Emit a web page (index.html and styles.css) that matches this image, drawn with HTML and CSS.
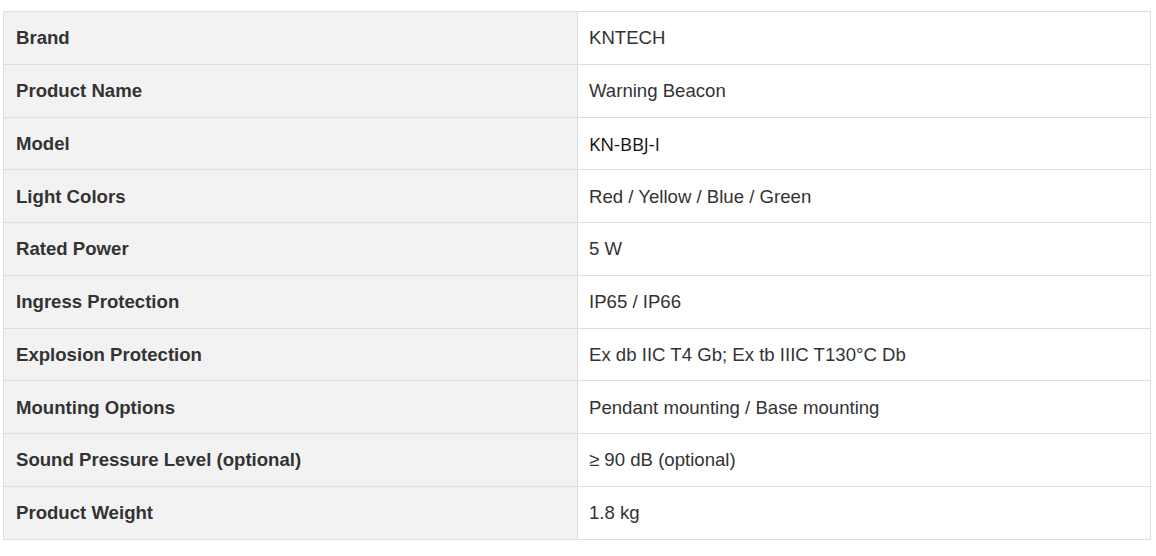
FILE: index.html
```html
<!DOCTYPE html>
<html>
<head>
<meta charset="utf-8">
<link rel="stylesheet" href="styles.css">
</head>
<body>
<div class="wrap">
<table class="spec">
<tbody>
<tr><td class="k">Brand</td><td class="v">KNTECH</td></tr>
<tr><td class="k">Product Name</td><td class="v">Warning Beacon</td></tr>
<tr><td class="k">Model</td><td class="v"><span class="alt">KN-BBJ-I</span></td></tr>
<tr><td class="k">Light Colors</td><td class="v">Red / Yellow / Blue / Green</td></tr>
<tr><td class="k">Rated Power</td><td class="v">5 W</td></tr>
<tr><td class="k">Ingress Protection</td><td class="v">IP65 / IP66</td></tr>
<tr><td class="k">Explosion Protection</td><td class="v">Ex db IIC T4 Gb; Ex tb IIIC T130°C Db</td></tr>
<tr><td class="k">Mounting Options</td><td class="v">Pendant mounting / Base mounting</td></tr>
<tr><td class="k">Sound Pressure Level (optional)</td><td class="v">≥ 90 dB (optional)</td></tr>
<tr><td class="k">Product Weight</td><td class="v">1.8 kg</td></tr>
</tbody>
</table>
</div>
</body>
</html>
```
FILE: styles.css
```css
html, body {
  margin: 0;
  padding: 0;
  background: #fff;
}
.wrap {
  padding: 11px 5px 0 3px;
}
.spec {
  width: 1148px;
  border-collapse: collapse;
  table-layout: fixed;
  font-family: "Liberation Sans", Arial, sans-serif;
  font-size: 18.6px;
  color: #333;
}
.spec tr {
  height: 52.75px;
}
.spec td {
  border: 1px solid #dedede;
  padding: 1px 12px 0 12px;
  vertical-align: middle;
}
.spec td.k {
  width: 574px;
  background: #f2f2f2;
  font-weight: bold;
  box-sizing: border-box;
}
.spec td.v {
  background: #fff;
  padding-left: 11px;
}
.alt {
  font-family: "Open Sans", sans-serif;
  font-size: 18.4px;
  color: #111;
}
```
